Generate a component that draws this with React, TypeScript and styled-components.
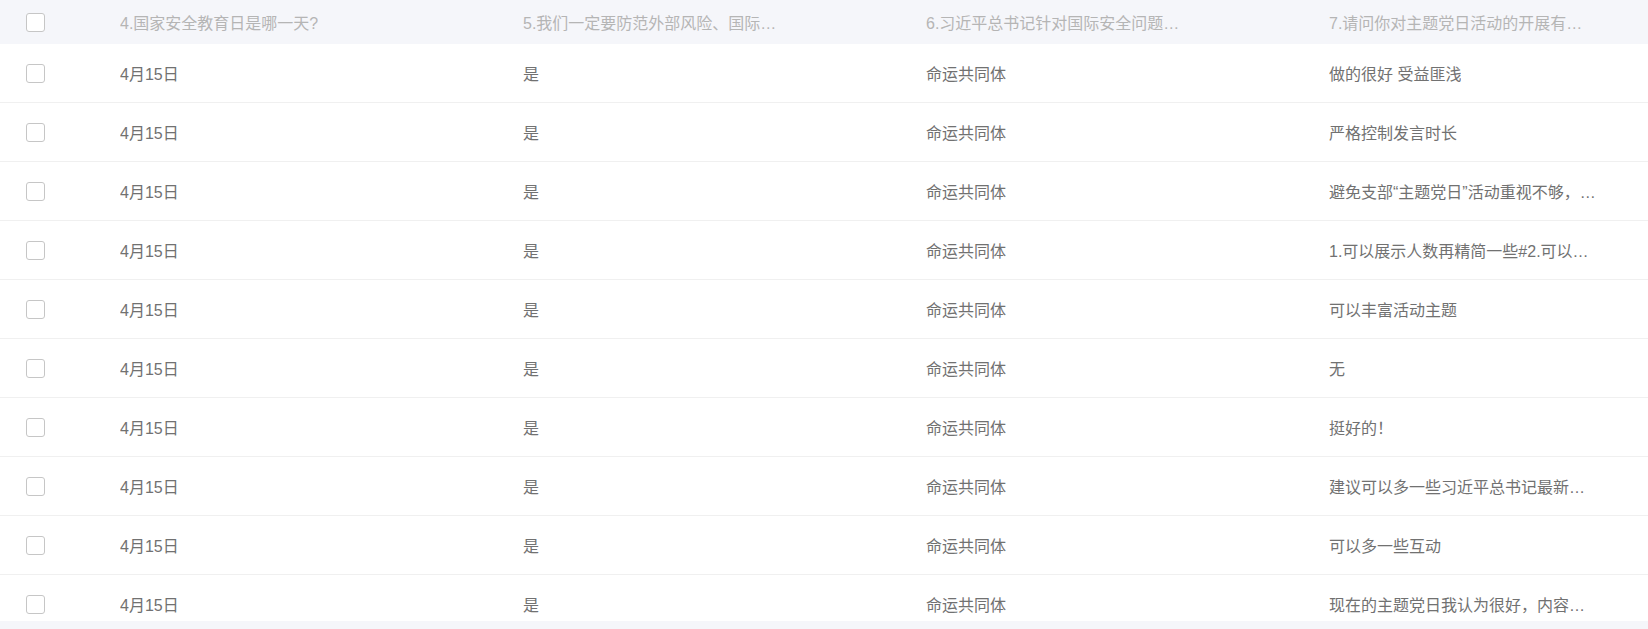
import React from "react";
import styled, { createGlobalStyle } from "styled-components";

const GlobalStyle = createGlobalStyle`
  html, body {
    margin: 0;
    padding: 0;
    background: #f5f6fa;
  }
  body {
    font-family: "Liberation Sans", "Noto Sans CJK SC", sans-serif;
    -webkit-font-smoothing: antialiased;
  }
`;

const TableWrap = styled.div`
  width: 1648px;
  height: 621px;
  overflow: hidden;
  background: #ffffff;
`;

const Row = styled.div<{ $header?: boolean }>`
  display: grid;
  grid-template-columns: 104px repeat(4, 403px);
  height: ${(p) => (p.$header ? "44px" : "58px")};
  background: ${(p) => (p.$header ? "#f5f6fa" : "#ffffff")};
  border-bottom: ${(p) => (p.$header ? "none" : "1px solid #f0f0f0")};
`;

const CheckCell = styled.div`
  display: flex;
  align-items: center;
  padding-left: 26px;
`;

const Checkbox = styled.span`
  display: block;
  box-sizing: border-box;
  width: 19px;
  height: 19px;
  margin-top: 1px;
  border: 1px solid #c6c6c6;
  border-radius: 3px;
  background: #ffffff;
`;

const Cell = styled.div<{ $header?: boolean }>`
  display: flex;
  align-items: center;
  padding-left: 16px;
  min-width: 0;
  font-size: 16px;
  color: ${(p) => (p.$header ? "#b5b5b5" : "#717171")};
`;

const CellText = styled.span`
  display: block;
  max-width: 268px;
  white-space: nowrap;
  overflow: hidden;
  text-overflow: ellipsis;
`;

const headers = [
  "4.国家安全教育日是哪一天?",
  "5.我们一定要防范外部风险、国际风险传导的风险吗？",
  "6.习近平总书记针对国际安全问题提出了构建人类什么的理念？",
  "7.请问你对主题党日活动的开展有什么意见和建议？",
];

const answers = [
  "做的很好 受益匪浅",
  "严格控制发言时长",
  "避免支部“主题党日”活动重视不够，流于形式",
  "1.可以展示人数再精简一些#2.可以增加互动环节",
  "可以丰富活动主题",
  "无",
  "挺好的！",
  "建议可以多一些习近平总书记最新讲话精神",
  "可以多一些互动",
  "现在的主题党日我认为很好，内容丰富",
];

export default function App() {
  return (
    <>
      <GlobalStyle />
      <TableWrap>
        <Row $header>
          <CheckCell>
            <Checkbox />
          </CheckCell>
          {headers.map((h) => (
            <Cell $header key={h}>
              <CellText>{h}</CellText>
            </Cell>
          ))}
        </Row>
        {answers.map((a, i) => (
          <Row key={i}>
            <CheckCell>
              <Checkbox />
            </CheckCell>
            <Cell>
              <CellText>4月15日</CellText>
            </Cell>
            <Cell>
              <CellText>是</CellText>
            </Cell>
            <Cell>
              <CellText>命运共同体</CellText>
            </Cell>
            <Cell>
              <CellText>{a}</CellText>
            </Cell>
          </Row>
        ))}
      </TableWrap>
    </>
  );
}
